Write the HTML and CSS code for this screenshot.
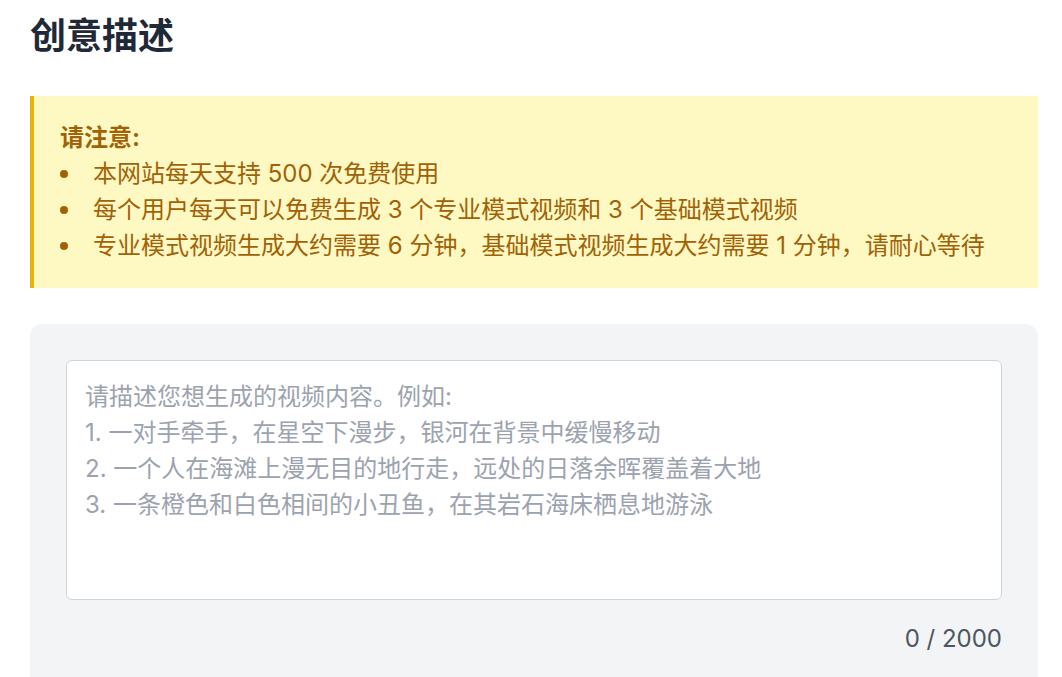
FILE: index.html
```html
<!DOCTYPE html>
<html lang="zh-CN">
<head>
<meta charset="utf-8">
<title>创意描述</title>
<link rel="stylesheet" href="styles.css">
</head>
<body>
<main class="page">
  <h1 class="title">创意描述</h1>
  <section class="notice">
    <p class="notice-head">请注意:</p>
    <ul class="notice-list">
      <li>本网站每天支持 500 次免费使用</li>
      <li>每个用户每天可以免费生成 3 个专业模式视频和 3 个基础模式视频</li>
      <li>专业模式视频生成大约需要 6 分钟，基础模式视频生成大约需要 1 分钟，请耐心等待</li>
    </ul>
  </section>
  <section class="panel">
    <textarea class="prompt" maxlength="2000" placeholder="请描述您想生成的视频内容。例如:
1. 一对手牵手，在星空下漫步，银河在背景中缓慢移动
2. 一个人在海滩上漫无目的地行走，远处的日落余晖覆盖着大地
3. 一条橙色和白色相间的小丑鱼，在其岩石海床栖息地游泳"></textarea>
    <div class="counter">0 / 2000</div>
  </section>
</main>
</body>
</html>
```

FILE: styles.css
```css
html, body {
  margin: 0;
  padding: 0;
  background: #ffffff;
}
body {
  font-family: "Inter", "Noto Sans CJK SC", sans-serif;
  overflow: hidden;
}
.page {
  padding: 12px 24px 0 30px;
}
.title {
  margin: 0 0 36px 0;
  font-size: 36px;
  line-height: 48px;
  font-weight: 700;
  color: #1f2937;
}
.notice {
  background: #fef9c3;
  border-left: 4px solid #eab308;
  padding: 24px 26px;
  color: #a16207;
  font-size: 24px;
  line-height: 36px;
  margin-bottom: 36px;
}
.notice-head {
  margin: 0;
  font-weight: 700;
}
.notice-list {
  list-style: none;
  margin: 0;
  padding: 0;
}
.notice-list li {
  display: flex;
  align-items: center;
}
.notice-list li::before {
  content: "";
  flex: none;
  width: 8px;
  height: 8px;
  border-radius: 50%;
  background: #a16207;
  margin: 0 25px 0 0;
}
.panel {
  background: #f3f4f6;
  border-radius: 12px 12px 0 0;
  padding: 36px 36px 30px 36px;
}
.prompt {
  display: block;
  box-sizing: border-box;
  width: 100%;
  height: 240px;
  margin: 0;
  padding: 18px 18px;
  border: 1px solid #d1d5db;
  border-radius: 6px;
  background: #ffffff;
  font-family: "Inter", "Noto Sans CJK SC", sans-serif;
  font-size: 24px;
  line-height: 36px;
  color: #1f2937;
  resize: none;
  outline: none;
}
.prompt::placeholder {
  color: #9ca3af;
}
.counter {
  margin-top: 21px;
  text-align: right;
  font-size: 24px;
  line-height: 36px;
  color: #4b5563;
}
```
